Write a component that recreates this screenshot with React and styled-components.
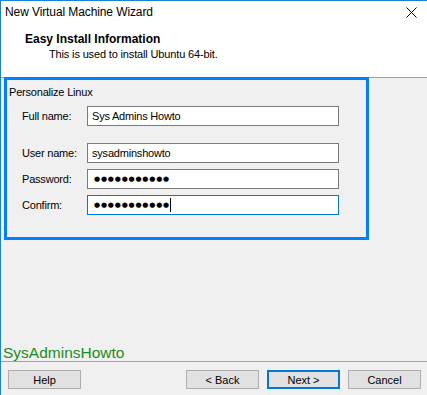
import React from "react";
import styled, { createGlobalStyle } from "styled-components";

const GlobalStyle = createGlobalStyle`
  * { box-sizing: border-box; }
  html, body {
    margin: 0;
    padding: 0;
    background: #f0f0f0;
  }
  body {
    font-family: "Liberation Sans", Arial, sans-serif;
    font-size: 11px;
    color: #000;
  }
`;

const Window = styled.div`
  width: 427px;
  height: 395px;
  display: flex;
  flex-direction: column;
  background: #f0f0f0;
  border-top: 1px solid #1883d7;
  border-left: 1px solid #1883d7;
  overflow: hidden;
`;

const TopArea = styled.div`
  height: 77px;
  background: #fff;
  border-bottom: 1px solid #a0a0a0;
  flex-shrink: 0;
`;

const TitleBar = styled.div`
  height: 30px;
  display: flex;
  justify-content: space-between;
  align-items: flex-start;
  padding: 3px 10px 0 4px;
`;

const Title = styled.span`
  font-size: 12px;
  line-height: 16px;
  letter-spacing: -0.1px;
`;

const CloseIcon = styled.svg`
  width: 11px;
  height: 11px;
  margin-top: 3px;
  display: block;
`;

const Header = styled.div`
  padding: 1px 0 0 24px;
`;

const Heading = styled.div`
  font-weight: bold;
  font-size: 12px;
  line-height: 15px;
`;

const SubHeading = styled.div`
  padding-left: 24px;
  line-height: 15px;
  letter-spacing: -0.15px;
`;

const Body = styled.div`
  flex: 1;
`;

const GroupBox = styled.div`
  margin: -1px 0 0 3px;
  width: 365px;
  height: 163px;
  border: 3px solid #0080ff;
  padding: 4px 0 0 2px;
`;

const Legend = styled.div`
  line-height: 16px;
  letter-spacing: -0.2px;
`;

const Fields = styled.div`
  display: flex;
  flex-direction: column;
  gap: 6px;
  margin: 6px 0 0 13px;
`;

const Row = styled.div`
  display: flex;
  align-items: center;
  height: 20px;
  margin-bottom: ${(p) => (p.$spaced ? "11px" : "0")};
`;

const Label = styled.label`
  width: 65px;
  letter-spacing: -0.2px;
`;

const TextBox = styled.div`
  width: 252px;
  height: 20px;
  background: #fff;
  border: 1px solid ${(p) => (p.$focused ? "#0078d7" : "#7a7a7a")};
  display: flex;
  align-items: center;
  padding-left: 4px;
  letter-spacing: -0.2px;
`;

const Dots = styled.span`
  font-family: "DejaVu Sans", sans-serif;
  font-size: 7px;
  letter-spacing: 0.8px;
  line-height: 1;
  margin-left: 2px;
`;

const Caret = styled.span`
  width: 1px;
  height: 14px;
  background: #000;
  margin-left: 0;
`;

const Footer = styled.div`
  flex-shrink: 0;
`;

const Brand = styled.div`
  color: #1a8c1a;
  font-size: 15.5px;
  line-height: 16px;
  padding-left: 2px;
`;

const ButtonRow = styled.div`
  border-top: 1px solid #a0a0a0;
  display: flex;
  gap: 8px;
  padding: 8px 6px 6px 7px;
`;

const Button = styled.button`
  width: 73px;
  height: 19px;
  padding: 0;
  font-family: inherit;
  font-size: 11px;
  color: #000;
  background: #e1e1e1;
  border: ${(p) => (p.$default ? "2px solid #0078d7" : "1px solid #adadad")};
  margin-right: ${(p) => (p.$push ? "auto" : "0")};
`;

export default function App() {
  return (
    <>
      <GlobalStyle />
      <Window>
        <TopArea>
          <TitleBar>
            <Title>New Virtual Machine Wizard</Title>
            <CloseIcon viewBox="0 0 11 11">
              <path d="M0.5 0.5 L10.5 10.5 M10.5 0.5 L0.5 10.5" stroke="#000" strokeWidth="1" />
            </CloseIcon>
          </TitleBar>
          <Header>
            <Heading>Easy Install Information</Heading>
            <SubHeading>This is used to install Ubuntu 64-bit.</SubHeading>
          </Header>
        </TopArea>
        <Body>
          <GroupBox>
            <Legend>Personalize Linux</Legend>
            <Fields>
              <Row $spaced>
                <Label>Full name:</Label>
                <TextBox>Sys Admins Howto</TextBox>
              </Row>
              <Row>
                <Label>User name:</Label>
                <TextBox>sysadminshowto</TextBox>
              </Row>
              <Row>
                <Label>Password:</Label>
                <TextBox>
                  <Dots>●●●●●●●●●●●</Dots>
                </TextBox>
              </Row>
              <Row>
                <Label>Confirm:</Label>
                <TextBox $focused>
                  <Dots>●●●●●●●●●●●</Dots>
                  <Caret />
                </TextBox>
              </Row>
            </Fields>
          </GroupBox>
        </Body>
        <Footer>
          <Brand>SysAdminsHowto</Brand>
          <ButtonRow>
            <Button $push>Help</Button>
            <Button>&lt; Back</Button>
            <Button $default>Next &gt;</Button>
            <Button>Cancel</Button>
          </ButtonRow>
        </Footer>
      </Window>
    </>
  );
}
